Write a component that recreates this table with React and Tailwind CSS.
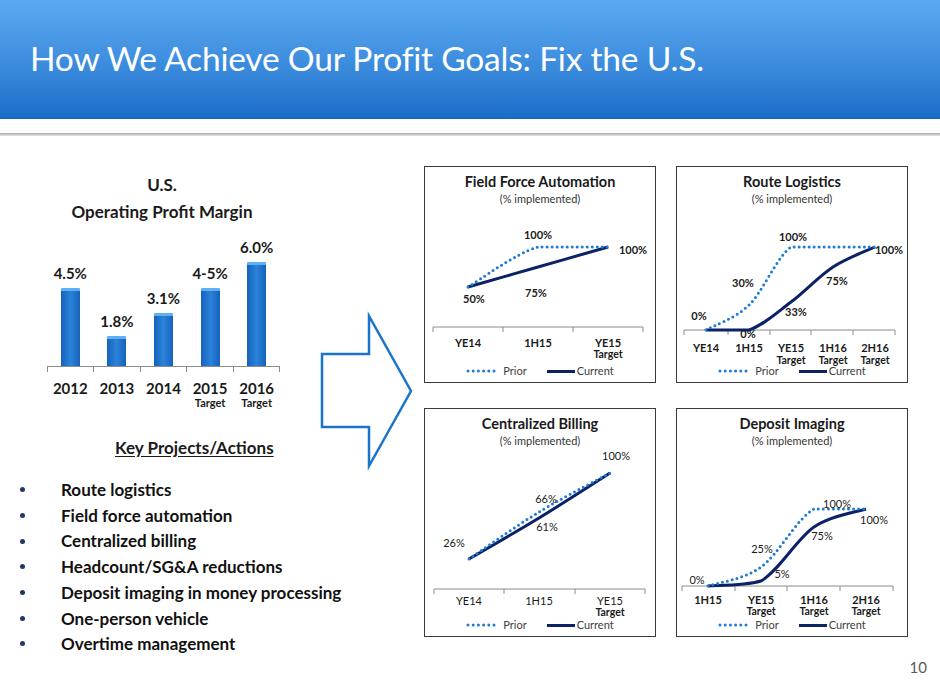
import { Fragment } from 'react';

const bars = [
  { year: '2012', value: '4.5%', h: 'h-[78px]' },
  { year: '2013', value: '1.8%', h: 'h-[30px]' },
  { year: '2014', value: '3.1%', h: 'h-[53px]' },
  { year: '2015', value: '4-5%', h: 'h-[78px]', target: true },
  { year: '2016', value: '6.0%', h: 'h-[104px]', target: true },
];

const projects = [
  'Route logistics',
  'Field force automation',
  'Centralized billing',
  'Headcount/SG&A reductions',
  'Deposit imaging in money processing',
  'One-person vehicle',
  'Overtime management',
];

// coordinates are panel-local pixels
const panels = [
  {
    title: 'Field Force Automation',
    h: 217,
    hClass: 'h-[217px]',
    axisY: 161,
    ticks: [8, 78, 148, 218],
    catY: 176,
    tgtY: 188,
    catBold: true,
    cats: [[43, 'YE14'], [113, '1H15'], [183, 'YE15', true]],
    prior: [[43, 121], [113, 81], [183, 81]],
    current: [[43, 121], [113, 101], [183, 81]],
    labels: [['100%', 113, 68], ['100%', 208, 83], ['50%', 49, 132], ['75%', 111, 126]],
    labelBold: true,
  },
  {
    title: 'Route Logistics',
    h: 217,
    hClass: 'h-[217px]',
    axisY: 164,
    ticks: [7, 51, 93, 134, 176, 218],
    catY: 181,
    tgtY: 193.5,
    catBold: true,
    cats: [[29, 'YE14'], [72, '1H15'], [114, 'YE15', true], [156, '1H16', true], [198, '2H16', true]],
    prior: [[29, 164], [72, 139], [114, 81], [156, 81], [198, 81]],
    current: [[29, 164], [72, 164], [114, 136], [156, 101], [198, 81]],
    labels: [
      ['0%', 22, 149],
      ['30%', 66, 116],
      ['100%', 116, 70],
      ['100%', 212, 83],
      ['75%', 160, 114],
      ['33%', 119, 145],
      ['0%', 71, 167],
    ],
    labelBold: true,
  },
  {
    title: 'Centralized Billing',
    h: 229,
    hClass: 'h-[229px]',
    axisY: 181,
    ticks: [9, 79, 150, 220],
    catY: 192.5,
    tgtY: 204,
    catBold: false,
    cats: [[44, 'YE14'], [114, '1H15'], [185, 'YE15', true]],
    prior: [[44, 151], [114, 104], [185, 65]],
    current: [[44, 151], [114, 110], [185, 65]],
    labels: [['26%', 29, 134], ['66%', 121, 90], ['61%', 122, 118], ['100%', 191, 47]],
    labelBold: false,
  },
  {
    title: 'Deposit Imaging',
    h: 229,
    hClass: 'h-[229px]',
    axisY: 178,
    ticks: [5, 58, 110, 163, 216],
    catY: 191.5,
    tgtY: 203,
    catBold: true,
    cats: [[31, '1H15'], [84, 'YE15', true], [137, '1H16', true], [189, '2H16', true]],
    prior: [[31, 178], [84, 159], [137, 101], [189, 101]],
    current: [[31, 178], [84, 173], [137, 119], [189, 101]],
    labels: [
      ['0%', 20, 171],
      ['25%', 85, 140],
      ['5%', 105, 165],
      ['100%', 160, 95],
      ['75%', 145, 127],
      ['100%', 197, 111],
    ],
    labelBold: false,
  },
];

// smoothed line like excel, without overshoot
function smooth(pts) {
  let d = `M${pts[0][0]},${pts[0][1]}`;
  for (let i = 0; i < pts.length - 1; i++) {
    const p0 = pts[i - 1] || pts[i];
    const p1 = pts[i];
    const p2 = pts[i + 1];
    const p3 = pts[i + 2] || p2;
    const lo = Math.min(p1[1], p2[1]);
    const hi = Math.max(p1[1], p2[1]);
    const clamp = (v) => Math.max(lo, Math.min(hi, v));
    const c1 = [p1[0] + (p2[0] - p0[0]) / 6, clamp(p1[1] + (p2[1] - p0[1]) / 6)];
    const c2 = [p2[0] - (p3[0] - p1[0]) / 6, clamp(p2[1] - (p3[1] - p1[1]) / 6)];
    d += ` C${c1[0]},${c1[1]} ${c2[0]},${c2[1]} ${p2[0]},${p2[1]}`;
  }
  return d;
}

function ChartPanel({ p }) {
  const w = 232;
  const svgH = p.h - 40 - 14 - 5;
  return (
    <div className={`${p.hClass} border border-[#3a3a3a] bg-white flex flex-col`}>
      <div className="pt-[5px] text-center text-[14.5px] leading-[20px] font-bold text-[#1a1a1a]">{p.title}</div>
      <div className="text-center text-[11px] leading-[14px] text-[#333]">(% implemented)</div>
      <svg width={w - 2} height={svgH} viewBox={`0 40 ${w - 2} ${svgH}`} className="block overflow-visible">
        <line x1={p.ticks[0]} x2={p.ticks[p.ticks.length - 1]} y1={p.axisY} y2={p.axisY} stroke="#8c8c8c" strokeWidth="1" />
        {p.ticks.map((x) => (
          <line key={x} x1={x} x2={x} y1={p.axisY} y2={p.axisY + 5} stroke="#8c8c8c" strokeWidth="1" />
        ))}
        <path d={smooth(p.current)} fill="none" stroke="#0c2266" strokeWidth="3" strokeLinejoin="round" />
        <path
          d={smooth(p.prior)}
          fill="none"
          stroke="#1f7ad6"
          strokeWidth="3"
          strokeDasharray="0 5"
          strokeLinecap="round"
        />
        {p.labels.map(([t, x, y], i) => (
          <text
            key={i}
            x={x}
            y={y}
            textAnchor="middle"
            dominantBaseline="central"
            fontSize="11"
            fill="#1a1a1a"
            className={p.labelBold ? 'font-bold' : 'font-normal'}
          >
            {t}
          </text>
        ))}
        {p.cats.map(([x, t, tgt]) => (
          <Fragment key={t}>
            <text
              x={x}
              y={p.catY}
              textAnchor="middle"
              dominantBaseline="central"
              fontSize="11"
              fill="#1a1a1a"
              className={p.catBold ? 'font-bold' : 'font-normal'}
            >
              {t}
            </text>
            {tgt && (
              <text
                x={x}
                y={p.tgtY}
                textAnchor="middle"
                dominantBaseline="central"
                fontSize="10.5"
                fill="#1a1a1a"
                className="font-bold"
              >
                Target
              </text>
            )}
          </Fragment>
        ))}
      </svg>
      <div className="h-[14px] flex items-center justify-center text-[11px] leading-[14px] text-[#404040]">
        <svg width="34" height="6" className="block">
          <line x1="2" x2="33" y1="3" y2="3" stroke="#1f7ad6" strokeWidth="3" strokeDasharray="0 5.2" strokeLinecap="round" />
        </svg>
        <span className="ml-[3px]">Prior</span>
        <span className="ml-[20px] w-[28px] h-[3px] bg-[#0c2266]" />
        <span className="ml-[2px]">Current</span>
      </div>
    </div>
  );
}

export default function App() {
  return (
    <div className="w-[940px] h-[686px] bg-white overflow-hidden font-['Lato','Open_Sans',sans-serif] text-[#1a1a1a]">
      <header className="h-[119px] bg-gradient-to-b from-[#5ba9f0] via-[#3f8fe0] to-[#1a6cc8] border-b border-[#1563bd] flex items-center pl-[30px] pb-[3px]">
        <h1 className="text-[33.5px] leading-[44px] font-normal text-white tracking-[-0.2px]">
          How We Achieve Our Profit Goals: Fix the U.S.
        </h1>
      </header>
      <div className="h-[14px] bg-white" />
      <div className="h-[3px] bg-gradient-to-b from-[#a9a9a9] to-[#e6e6e6]" />

      <main className="flex items-start">
        {/* left column: margin chart + project list */}
        <section className="w-[310px] shrink-0 flex flex-col pt-[35px]">
          <div className="ml-[42px] w-[240px] text-center text-[17px] leading-[27px] font-bold text-[#1a1a1a]">
            <div>U.S.</div>
            <div>Operating Profit Margin</div>
          </div>

          <div className="ml-[47px] w-[233px] mt-[13px]">
            <div className="h-[128px] flex items-end">
              {bars.map((b) => (
                <div key={b.year} className="flex-1 flex flex-col items-center justify-end">
                  <div className="text-[15px] leading-[18px] font-bold mb-[6px]">{b.value}</div>
                  <div className={`${b.h} w-[19px] bg-gradient-to-r from-[#1662bb] via-[#2b83da] to-[#1662bb] border-t-[3px] border-[#5fb0f2] rounded-t-[1px]`} />
                </div>
              ))}
            </div>
            <div className="flex border-t border-[#8c8c8c]">
              {bars.map((b, i) => (
                <div
                  key={b.year}
                  className={`flex-1 h-[5px] border-l border-[#8c8c8c] ${i === bars.length - 1 ? 'border-r' : ''}`}
                />
              ))}
            </div>
            <div className="flex mt-[7px]">
              {bars.map((b) => (
                <div key={b.year} className="flex-1 flex flex-col items-center">
                  <div className="text-[15px] leading-[18px] font-bold">{b.year}</div>
                  {b.target && <div className="text-[11px] leading-[12px] font-bold">Target</div>}
                </div>
              ))}
            </div>
          </div>

          <div className="mt-[29px] pl-[115px] text-[17px] leading-[20px] font-bold underline underline-offset-[2px]">
            Key Projects/Actions
          </div>

          <ul className="mt-[19px]">
            {projects.map((t) => (
              <li key={t} className="flex items-center h-[25.7px] text-[17px] font-bold text-[#111] whitespace-nowrap">
                <span className="w-[61px] shrink-0 pl-[20px] flex items-center">
                  <span className="w-[5px] h-[5px] rounded-full bg-[#1f3864]" />
                </span>
                {t}
              </li>
            ))}
          </ul>
        </section>

        {/* arrow */}
        <div className="w-[114px] shrink-0 mt-[175px]">
          <svg width="114" height="160" className="block">
            <polygon
              points="12,43 59,43 59,5 101,80 59,155 59,116 12,116"
              fill="white"
              stroke="#1874cd"
              strokeWidth="2.5"
            />
          </svg>
        </div>

        {/* charts */}
        <section className="flex-1 flex flex-col pt-[30px]">
          <div className="grid grid-cols-[232px_232px] gap-x-[20px] gap-y-[25px]">
            {panels.map((p) => (
              <ChartPanel key={p.title} p={p} />
            ))}
          </div>
          <div className="mt-[20px] pr-[13px] text-right text-[15px] leading-[20px] text-[#595959]">10</div>
        </section>
      </main>
    </div>
  );
}
